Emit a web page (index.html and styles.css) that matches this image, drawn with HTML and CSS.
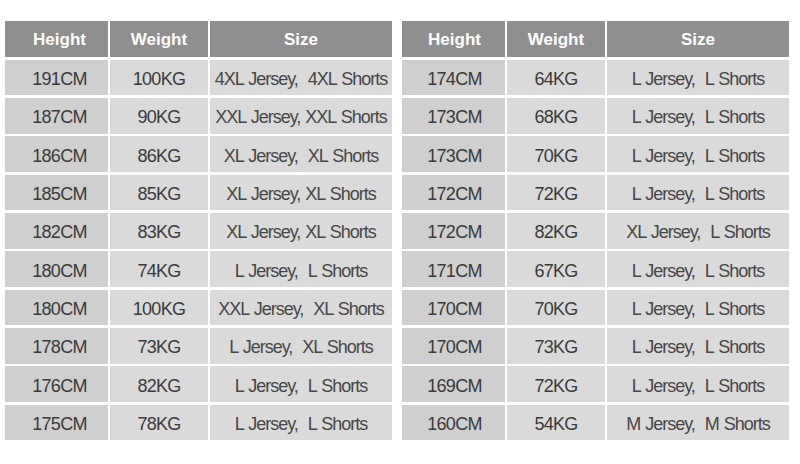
FILE: index.html
```html
<!DOCTYPE html>
<html>
<head>
<meta charset="utf-8">
<link rel="stylesheet" href="styles.css">
</head>
<body>
<div class="page">
  <div class="chart chart-left">
    <div class="hd first">Height</div><div class="hd">Weight</div><div class="hd">Size</div>
    <div class="c h">191CM</div><div class="c w">100KG</div><div class="c s">4XL Jersey,&nbsp; 4XL Shorts</div>
    <div class="c h">187CM</div><div class="c w">90KG</div><div class="c s">XXL Jersey, XXL Shorts</div>
    <div class="c h">186CM</div><div class="c w">86KG</div><div class="c s">XL Jersey,&nbsp; XL Shorts</div>
    <div class="c h">185CM</div><div class="c w">85KG</div><div class="c s">XL Jersey, XL Shorts</div>
    <div class="c h">182CM</div><div class="c w">83KG</div><div class="c s">XL Jersey, XL Shorts</div>
    <div class="c h">180CM</div><div class="c w">74KG</div><div class="c s">L Jersey,&nbsp; L Shorts</div>
    <div class="c h">180CM</div><div class="c w">100KG</div><div class="c s">XXL Jersey,&nbsp; XL Shorts</div>
    <div class="c h">178CM</div><div class="c w">73KG</div><div class="c s">L Jersey,&nbsp; XL Shorts</div>
    <div class="c h">176CM</div><div class="c w">82KG</div><div class="c s">L Jersey,&nbsp; L Shorts</div>
    <div class="c h">175CM</div><div class="c w">78KG</div><div class="c s">L Jersey,&nbsp; L Shorts</div>
  </div>
  <div class="chart chart-right">
    <div class="hd first">Height</div><div class="hd">Weight</div><div class="hd">Size</div>
    <div class="c h">174CM</div><div class="c w">64KG</div><div class="c s">L Jersey,&nbsp; L Shorts</div>
    <div class="c h">173CM</div><div class="c w">68KG</div><div class="c s">L Jersey,&nbsp; L Shorts</div>
    <div class="c h">173CM</div><div class="c w">70KG</div><div class="c s">L Jersey,&nbsp; L Shorts</div>
    <div class="c h">172CM</div><div class="c w">72KG</div><div class="c s">L Jersey,&nbsp; L Shorts</div>
    <div class="c h">172CM</div><div class="c w">82KG</div><div class="c s">XL Jersey,&nbsp; L Shorts</div>
    <div class="c h">171CM</div><div class="c w">67KG</div><div class="c s">L Jersey,&nbsp; L Shorts</div>
    <div class="c h">170CM</div><div class="c w">70KG</div><div class="c s">L Jersey,&nbsp; L Shorts</div>
    <div class="c h">170CM</div><div class="c w">73KG</div><div class="c s">L Jersey,&nbsp; L Shorts</div>
    <div class="c h">169CM</div><div class="c w">72KG</div><div class="c s">L Jersey,&nbsp; L Shorts</div>
    <div class="c h">160CM</div><div class="c w">54KG</div><div class="c s">M Jersey,&nbsp; M Shorts</div>
  </div>
</div>
</body>
</html>
```

FILE: styles.css
```css
html, body {
  margin: 0;
  padding: 0;
  background: #ffffff;
}
body {
  width: 800px;
  height: 464px;
  overflow: hidden;
  font-family: "Liberation Sans", Arial, sans-serif;
}
.page {
  display: flex;
  gap: 10px;
  padding: 21px 0 0 5px;
}
.chart {
  display: grid;
  grid-template-columns: 103px 98px 182px;
  grid-template-rows: 36px repeat(10, 35.5px);
  column-gap: 2px;
  row-gap: 2.83px;
}
.hd {
  background: #8f8f8f;
  color: #ffffff;
  font-weight: bold;
  font-size: 17px;
  display: flex;
  align-items: center;
  justify-content: center;
  padding-top: 2px;
  box-sizing: border-box;
}
.c {
  display: flex;
  align-items: center;
  justify-content: center;
  font-size: 18px;
  letter-spacing: -0.7px;
  color: #3a3a3a;
  padding-top: 4px;
  box-sizing: border-box;
  white-space: nowrap;
}
.h {
  background: #cfcfcf;
}
.w {
  background: #dadada;
}
.s {
  background: #dadada;
  color: #474747;
  letter-spacing: -1px;
  word-spacing: 1px;
}
.chart-left .first,
.chart-left .h {
  padding-left: 6px;
}
.chart-right .first,
.chart-right .h {
  padding-left: 2px;
}
```
